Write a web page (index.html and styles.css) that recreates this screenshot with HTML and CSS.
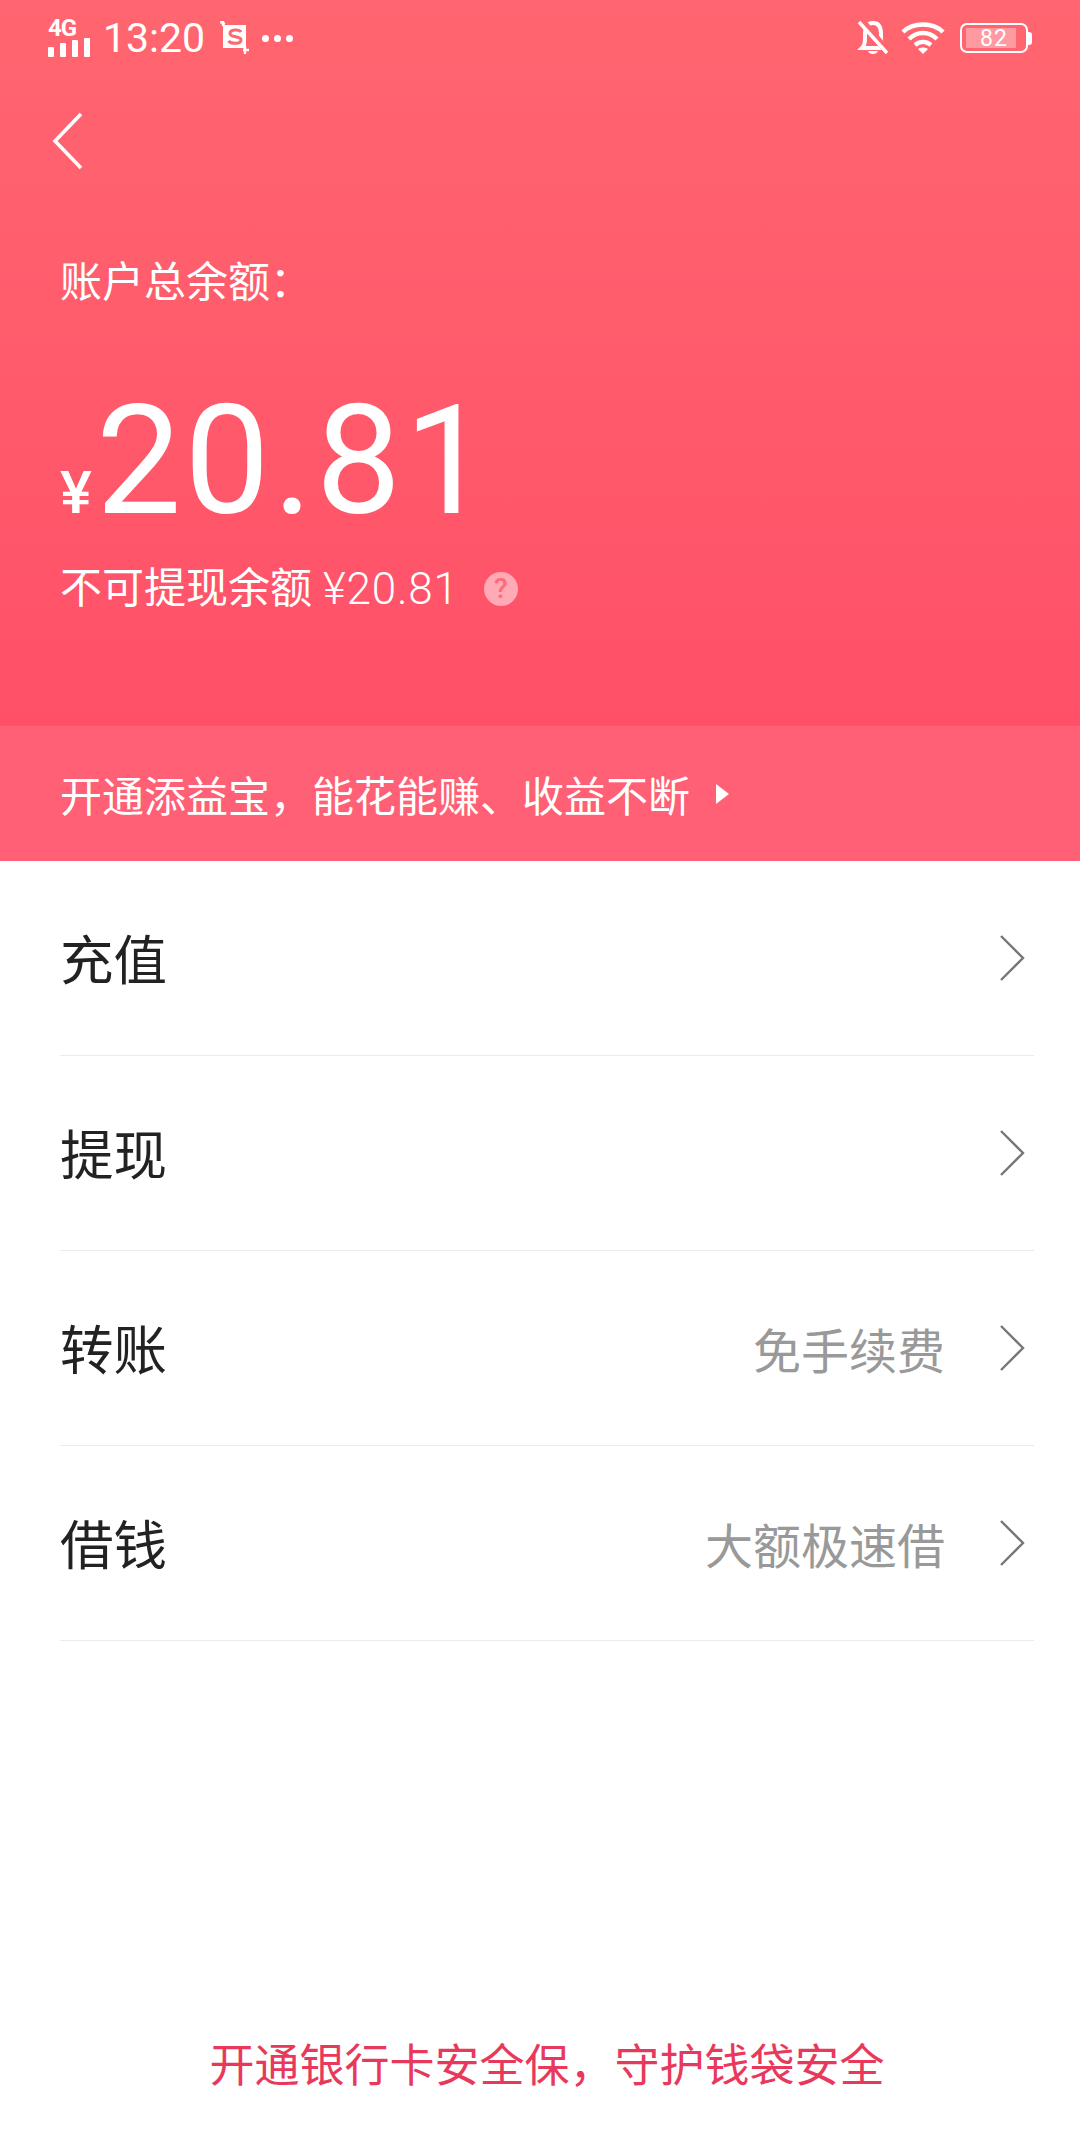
FILE: index.html
```html
<!DOCTYPE html>
<html lang="zh-CN">
<head>
  <meta charset="UTF-8">
  <meta name="viewport" content="width=device-width, initial-scale=1.0">
  <title>账户总余额</title>
  <link rel="stylesheet" href="styles.css">
</head>
<body>

<div class="hero">
  <!-- Status bar -->
  <div class="status-bar">
    <div class="status-left">
      <div class="signal">
        <span class="signal-text">4G</span>
        <div class="signal-bars">
          <i class="bar-1"></i><i class="bar-2"></i><i class="bar-3"></i><i class="bar-4"></i>
        </div>
      </div>
      <span class="clock">13:20</span>
      <svg class="shot-icon" width="30" height="34" viewBox="0 0 30 34">
        <rect x="3" y="4" width="23" height="23" fill="#fff"/>
        <path d="M0 1 L5 3 M3 0 V5 M25 26 V33 M23 29 H29" stroke="#fff" stroke-width="2.4" fill="none"/>
        <path d="M21 11 C19 8 10 8 10 12.500 C10 17 21 14.500 21 19 C21 23.500 11 23 8.500 20" stroke="#ff6670" stroke-width="3" fill="none"/>
      </svg>
      <div class="dots"><i></i><i></i><i></i></div>
    </div>
    <div class="status-right">
      <svg width="32" height="36" viewBox="0 0 32 36">
        <path d="M5 28 C8 25 8 22 8 14 C8 6 11 3 16 3 C21 3 24 6 24 14 C24 22 24 25 28 28 Z" fill="none" stroke="#fff" stroke-width="4"/>
        <path d="M11 31 H21 C20 35 12 35 11 31 Z" fill="#fff"/>
        <path d="M5 1 L31 32" stroke="#ff6670" stroke-width="7"/>
        <path d="M2 2 L30 33" stroke="#fff" stroke-width="3.400"/>
      </svg>
      <svg class="wifi" width="44" height="34" viewBox="0 0 44 34">
        <path d="M2 11 C12 1 32 1 42 11" fill="none" stroke="#fff" stroke-width="4.500"/>
        <path d="M8 18 C16 10 28 10 36 18" fill="none" stroke="#fff" stroke-width="4.500"/>
        <path d="M14 24 C19 20 25 20 30 24" fill="none" stroke="#fff" stroke-width="4.500"/>
        <path d="M17 28 C20 26 24 26 27 28 L22 33 Z" fill="#fff"/>
      </svg>
      <div class="battery">
        <div class="battery-body">
          <div class="battery-fill"></div>
          <span class="battery-num">82</span>
        </div>
        <div class="battery-cap"></div>
      </div>
    </div>
  </div>

  <!-- Back button -->
  <div class="nav">
    <svg width="32" height="58" viewBox="0 0 32 58">
      <path d="M29 2 L3 29 L29 56" fill="none" stroke="#fff" stroke-width="3.600"/>
    </svg>
  </div>

  <div class="balance-label">账户总余额：</div>
  <div class="balance">
    <span class="balance-yen">¥</span><span class="balance-num">20.81</span>
  </div>
  <div class="balance-sub">
    <span>不可提现余额</span>
    <span class="balance-sub-num">¥20.81</span>
    <span class="help">?</span>
  </div>
</div>

<!-- Promo strip -->
<div class="promo">
  <span>开通添益宝，能花能赚、收益不断</span>
  <i class="promo-arrow"></i>
</div>

<!-- Menu list -->
<div class="menu">
  <div class="menu-row">
    <span class="menu-title">充值</span>
    <svg class="chevron" width="26" height="46" viewBox="0 0 26 46"><path d="M2 1 L24 23 L2 45" fill="none" stroke="#777" stroke-width="2.400"/></svg>
  </div>
  <div class="menu-row">
    <span class="menu-title">提现</span>
    <svg class="chevron" width="26" height="46" viewBox="0 0 26 46"><path d="M2 1 L24 23 L2 45" fill="none" stroke="#777" stroke-width="2.400"/></svg>
  </div>
  <div class="menu-row">
    <span class="menu-title">转账</span>
    <span class="menu-extra">免手续费</span>
    <svg class="chevron" width="26" height="46" viewBox="0 0 26 46"><path d="M2 1 L24 23 L2 45" fill="none" stroke="#777" stroke-width="2.400"/></svg>
  </div>
  <div class="menu-row">
    <span class="menu-title">借钱</span>
    <span class="menu-extra">大额极速借</span>
    <svg class="chevron" width="26" height="46" viewBox="0 0 26 46"><path d="M2 1 L24 23 L2 45" fill="none" stroke="#777" stroke-width="2.400"/></svg>
  </div>
</div>

<div class="footer-link">开通银行卡安全保，守护钱袋安全</div>

</body>
</html>
```

FILE: styles.css
```css
body {
  margin: 0;
  width: 1080px;
  height: 2154px;
  overflow: hidden;
  background-color: #fff;
  display: flex;
  flex-direction: column;
  font-family: "Roboto", "Noto Sans CJK SC", sans-serif;
}

/* Red header */
.hero {
  height: 726px;
  box-sizing: border-box;
  background: linear-gradient(to bottom, #ff6670, #ff5068);
  color: #fff;
}

.status-bar {
  height: 70px;
  box-sizing: border-box;
  padding: 6px 48px 0 48px;
  display: flex;
  justify-content: space-between;
  align-items: center;
}

.status-left, .status-right {
  display: flex;
  align-items: center;
}

.signal {
  width: 42px;
  display: flex;
  flex-direction: column;
}

.signal-text {
  font-size: 24px;
  line-height: 18px;
  font-weight: 700;
  letter-spacing: -1px;
}

.signal-bars {
  height: 20px;
  display: flex;
  align-items: flex-end;
  justify-content: space-between;
}

.signal-bars i {
  width: 6px;
  background-color: #fff;
  border-radius: 1px;
}

.bar-1 { height: 10px; }
.bar-2 { height: 14px; }
.bar-3 { height: 17px; }
.bar-4 { height: 19px; }

.clock {
  font-size: 41px;
  margin-left: 13px;
}

.shot-icon {
  margin-left: 15px;
}

.dots {
  display: flex;
  gap: 5px;
  margin-left: 12px;
}

.dots i {
  width: 7px;
  height: 7px;
  border-radius: 50%;
  background-color: #fff;
}

.wifi {
  margin-left: 12px;
}

.battery {
  display: flex;
  align-items: center;
  margin-left: 15px;
}

.battery-body {
  width: 68px;
  height: 30px;
  box-sizing: border-box;
  border: 2px solid #fff;
  border-radius: 7px;
  position: relative;
  display: flex;
  justify-content: center;
  align-items: center;
}

.battery-fill {
  position: absolute;
  left: 4px;
  top: 3px;
  bottom: 3px;
  width: 50px;
  background-color: rgba(255, 255, 255, 0.35);
}

.battery-num {
  position: relative;
  font-size: 23px;
  letter-spacing: 1px;
}

.battery-cap {
  width: 4px;
  height: 13px;
  background-color: #fff;
  border-radius: 0 3px 3px 0;
}

.nav {
  height: 58px;
  padding: 42px 0 0 52px;
}

.balance-label {
  margin: 83px 0 0 60px;
  font-size: 42px;
  line-height: 60px;
}

.balance {
  margin: 60px 0 0 60px;
  height: 176px;
  display: flex;
  align-items: baseline;
}

.balance-yen {
  font-size: 60px;
  font-weight: 500;
  line-height: 176px;
}

.balance-num {
  margin-left: 4px;
  font-size: 152px;
  letter-spacing: 3px;
  line-height: 176px;
}

.balance-sub {
  margin: 10px 0 0 60px;
  font-size: 42px;
  line-height: 60px;
  display: flex;
  align-items: center;
}

.balance-sub-num {
  margin-left: 11px;
  font-size: 44px;
  font-weight: 300;
  letter-spacing: 0.8px;
}

.help {
  width: 34px;
  height: 34px;
  margin-left: 25px;
  border-radius: 50%;
  background-color: rgba(255, 255, 255, 0.5);
  color: #ff6a7c;
  font-size: 28px;
  font-weight: 500;
  line-height: 34px;
  text-align: center;
}

/* Promo strip */
.promo {
  height: 135px;
  padding-left: 60px;
  background-color: #ff6076;
  color: #fff;
  font-size: 42px;
  display: flex;
  align-items: center;
}

.promo-arrow {
  width: 0;
  height: 0;
  margin-left: 26px;
  border-left: 13px solid #fff;
  border-top: 10px solid transparent;
  border-bottom: 10px solid transparent;
}

/* Menu */
.menu {
  padding: 0 46px 0 60px;
}

.menu-row {
  height: 194px;
  border-bottom: 1px solid #ebebeb;
  display: flex;
  align-items: center;
}

.menu-title {
  flex: 1;
  padding-bottom: 4px;
  font-size: 53.500px;
  color: #222;
}

.menu-extra {
  font-size: 48px;
  color: #999;
  margin-right: 54px;
}

.chevron {
  margin-right: 9px;
}

.footer-link {
  margin-top: 396px;
  padding-left: 14px;
  text-align: center;
  font-size: 45px;
  line-height: 60px;
  color: #e8395c;
}
```
